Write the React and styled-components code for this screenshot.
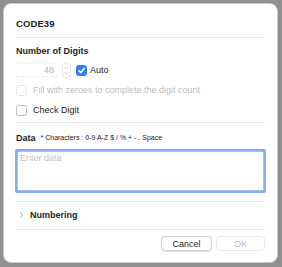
import React from 'react'
import styled, { createGlobalStyle } from 'styled-components'

const GlobalStyle = createGlobalStyle`
  html, body {
    margin: 0;
    padding: 0;
    background: #8f8f8f;
  }
  body {
    font-family: 'Liberation Sans', Arial, sans-serif;
    color: #1d1d1d;
  }
`

const Dialog = styled.div`
  box-sizing: border-box;
  margin: 3px;
  width: 275px;
  height: 260px;
  background: #fff;
  border: 1px solid #c9c9c9;
  border-radius: 8px;
  padding: 14px 12px 0 12px;
  display: flex;
  flex-direction: column;
`

const Title = styled.div`
  font-size: 9.5px;
  font-weight: bold;
  line-height: 12px;
  letter-spacing: 0.1px;
`

const Divider = styled.div`
  height: 1px;
  background: #e6e6e6;
  margin: ${(p) => p.$m || '0'};
`

const SectionLabel = styled.div`
  font-size: 9px;
  font-weight: bold;
  line-height: 12px;
  margin-top: ${(p) => p.$mt || '0'};
`

const Row = styled.div`
  display: flex;
  align-items: center;
  gap: ${(p) => p.$gap || '6px'};
  height: ${(p) => p.$h || '14px'};
  margin-top: ${(p) => p.$mt || '0'};
`

const NumberBox = styled.div`
  box-sizing: border-box;
  width: 42px;
  height: 14px;
  border-bottom: 1px dotted #e0e0e0;
  border-top: 1px dotted #ececec;
  font-size: 9px;
  color: #b4b4b4;
  text-align: right;
  padding-right: 4px;
  line-height: 12px;
`

const Stepper = styled.div`
  box-sizing: border-box;
  width: 9px;
  height: 15px;
  border: 1px solid #e4e4e4;
  border-radius: 4px;
  display: flex;
  align-items: center;
  justify-content: center;
  margin-right: 1px;
`

const Box = styled.span`
  box-sizing: border-box;
  width: 11px;
  height: 11px;
  border-radius: 2.5px;
  flex: none;
  display: inline-flex;
  align-items: center;
  justify-content: center;
  background: ${(p) => (p.$checked ? '#2f7cf6' : '#fff')};
  border: 1px solid
    ${(p) => (p.$checked ? '#2f7cf6' : p.$disabled ? '#e3e3e3' : '#b9b9b9')};
`

const OptionText = styled.span`
  font-size: 9px;
  line-height: 12px;
  color: ${(p) => (p.$disabled ? '#bdbdbd' : '#1d1d1d')};
`

const Hint = styled.span`
  font-size: 7px;
  color: #222;
  margin-top: -2px;
`

const DataArea = styled.div`
  box-sizing: border-box;
  margin: 4px -1px 0 -1px;
  height: 44px;
  border: 2px solid #82acf6;
  border-radius: 2px;
  box-shadow: inset 0 0 0 0.5px #4f88ef;
  padding: 2px 3px;
  font-size: 9px;
  color: #c2c2c2;
`

const Chevron = styled.span`
  width: 10px;
  display: inline-flex;
  justify-content: center;
`

const Footer = styled.div`
  display: flex;
  justify-content: flex-end;
  gap: 4px;
  margin-top: 6px;
`

const Button = styled.div`
  box-sizing: border-box;
  width: ${(p) => p.$w};
  height: 15px;
  border-radius: 4px;
  border: 1px solid ${(p) => (p.$disabled ? '#e8e8e8' : '#d2d2d2')};
  box-shadow: ${(p) => (p.$disabled ? 'none' : '0 0.5px 1px rgba(0,0,0,0.12)')};
  font-size: 9px;
  display: flex;
  align-items: center;
  justify-content: center;
  color: ${(p) => (p.$disabled ? '#bdbdbd' : '#1d1d1d')};
`

const Check = () => (
  <svg width="9" height="9" viewBox="0 0 10 10">
    <path d="M2 5.2 L4.2 7.4 L8.2 2.6" fill="none" stroke="#fff" strokeWidth="1.7" strokeLinecap="round" strokeLinejoin="round" />
  </svg>
)

const StepArrows = () => (
  <svg width="5" height="11" viewBox="0 0 5 11">
    <path d="M0.8 3.6 L2.5 1.8 L4.2 3.6 M0.8 7.4 L2.5 9.2 L4.2 7.4" fill="none" stroke="#c4c4c4" strokeWidth="0.9" strokeLinecap="round" strokeLinejoin="round" />
  </svg>
)

const App = () => (
  <>
    <GlobalStyle />
    <Dialog>
      <Title>CODE39</Title>
      <Divider $m="7px 0 0 0" />
      <SectionLabel $mt="7px">Number of Digits</SectionLabel>
      <Row $mt="6px" $gap="4px">
        <NumberBox>48</NumberBox>
        <Stepper>
          <StepArrows />
        </Stepper>
        <Box $checked>
          <Check />
        </Box>
        <OptionText style={{ marginLeft: -1 }}>Auto</OptionText>
      </Row>
      <Row $mt="6px">
        <Box $disabled />
        <OptionText $disabled>Fill with zeroes to complete the digit count</OptionText>
      </Row>
      <Row $mt="6px">
        <Box />
        <OptionText>Check Digit</OptionText>
      </Row>
      <Divider $m="5px 0 0 0" />
      <Row $mt="8px" $h="14px" $gap="5px">
        <SectionLabel>Data</SectionLabel>
        <Hint>* Characters : 0-9 A-Z $ / % + - . Space</Hint>
      </Row>
      <DataArea>Enter data</DataArea>
      <Divider $m="8px 0 0 0" />
      <Row $mt="6px" $h="13px" $gap="4px">
        <Chevron>
          <svg width="5" height="8" viewBox="0 0 5 8">
            <path d="M1 1 L4 4 L1 7" fill="none" stroke="#b0b0b0" strokeWidth="0.9" />
          </svg>
        </Chevron>
        <SectionLabel>Numbering</SectionLabel>
      </Row>
      <Divider $m="8px 0 0 0" />
      <Footer>
        <Button $w="51px">Cancel</Button>
        <Button $w="49px" $disabled>OK</Button>
      </Footer>
    </Dialog>
  </>
)

export default App
